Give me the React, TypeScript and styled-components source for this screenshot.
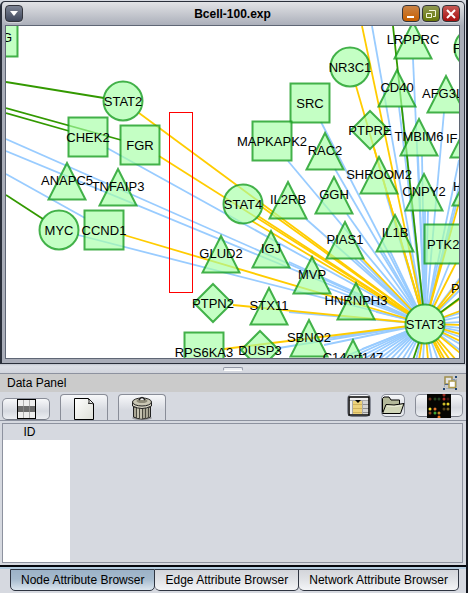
import React, { useState } from "react";
import styled, { createGlobalStyle } from "styled-components";

const GlobalStyle = createGlobalStyle`
  * { box-sizing: border-box; }
  body {
    margin: 0;
    background: #d6d9e0;
    font-family: "Liberation Sans", Arial, sans-serif;
    font-size: 12px;
    color: #000;
  }
  button { font: inherit; color: inherit; margin: 0; padding: 0; }
`;

const Page = styled.div`
  display: flex;
  flex-direction: column;
  min-height: 100vh;
  border-right: 2px solid #14171f;
  background: #d6d9e0;
`;

/* ---------- network window ---------- */

const NetworkWindow = styled.section`
  margin: 1px 1px 0 0;
  padding: 0 4px 4px 3px;
  border: 1px solid #2a2f3a;
  border-left-width: 2px;
  border-radius: 5px 5px 0 0;
  background: linear-gradient(#e2e3e6, #a9adb8 24px, #a9adb8);
`;

const TitleBar = styled.header`
  display: grid;
  grid-template-columns: 1fr auto 1fr;
  align-items: center;
  height: 23px;
`;

const Title = styled.h1`
  margin: 0;
  font-size: 12px;
  line-height: 16px;
  font-weight: bold;
`;

const WindowButtons = styled.div`
  display: flex;
  justify-content: flex-end;
  gap: 2px;
`;

const WindowButton = styled.button<{ $top: string; $bottom: string }>`
  display: grid;
  place-items: center;
  width: 18px;
  height: 17px;
  border: 1px solid #33353c;
  border-radius: 4px;
  background: linear-gradient(${(p) => p.$top}, ${(p) => p.$bottom});
  box-shadow: 0 1px 0 rgba(255, 255, 255, 0.4);
`;

const Canvas = styled.svg`
  display: block;
  width: 100%;
  border: 1px solid #5f6675;
  background: #fff;
  font-family: "Liberation Sans", Arial, sans-serif;
  font-size: 13px;
`;

type Shape = "circle" | "square" | "triangle" | "diamond";
/* The optional last value is the left edge of a label that runs past the view. */
type GraphNode = [label: string, shape: Shape, x: number, y: number, labelX?: number];
type Edge = [color: string, x1: number, y1: number, x2: number, y2: number];

const BLUE = "#99ccff";
const GOLD = "#ffcc00";
const GREEN = "#339900";

const hub = { x: 425, y: 324 };

const nodes: GraphNode[] = [
  ["G", "square", -2, 37, 2],
  ["STAT2", "circle", 123, 101],
  ["CHEK2", "square", 88, 137],
  ["FGR", "square", 140, 145],
  ["NR3C1", "circle", 350, 67],
  ["SRC", "square", 310, 103],
  ["MAPKAPK2", "square", 272, 141],
  ["LRPPRC", "triangle", 413, 40],
  ["F", "circle", 474, 48, 453],
  ["CD40", "triangle", 397, 88],
  ["AFG3L", "triangle", 446, 94, 422],
  ["PTPRE", "diamond", 370, 130],
  ["TMBIM6", "triangle", 419, 137],
  ["RAC2", "triangle", 325, 151],
  ["IF", "triangle", 469, 139, 446],
  ["SHROOM2", "triangle", 379, 175],
  ["CNPY2", "triangle", 424, 192],
  ["H", "triangle", 471, 187, 453],
  ["GGH", "triangle", 334, 195],
  ["IL2RB", "triangle", 288, 200],
  ["STAT4", "circle", 243, 204],
  ["ANAPC5", "triangle", 67, 181],
  ["TNFAIP3", "triangle", 118, 187],
  ["MYC", "circle", 59, 230],
  ["CCND1", "square", 104, 230],
  ["IL1B", "triangle", 395, 233],
  ["PIAS1", "triangle", 345, 240],
  ["PTK2", "square", 444, 244, 427],
  ["GLUD2", "triangle", 221, 254],
  ["IGJ", "triangle", 271, 249],
  ["MVP", "triangle", 312, 275],
  ["HNRNPH3", "triangle", 356, 301],
  ["STX11", "triangle", 269, 306],
  ["PTPN2", "diamond", 213, 303],
  ["SBNO2", "triangle", 309, 338],
  ["DUSP3", "diamond", 260, 350],
  ["RPS6KA3", "square", 204, 352],
  ["C14orf147", "triangle", 353, 358],
  ["STAT3", "circle", hub.x, hub.y],
];

const localEdges: Edge[] = [
  [GREEN, 6, 82, 104, 98],
  [GREEN, 6, 108, 121, 140],
  [GREEN, 6, 113, 69, 131],
  [GREEN, 6, 195, 43, 219],
  [BLUE, 6, 174, 85, 218],
];

/* Far ends of the edges that meet at STAT3, in drawing order. */
const hubEdges: Record<string, [number, number][]> = {
  [BLUE]: [
    [107, 148], [6, 139], [6, 151], [78, 235], [289, 262], [288, 161],
    [321, 122], [335, 169], [347, 214], [306, 219], [372, 26], [413, 59],
    [399, 107], [402, 107], [386, 194], [418, 156], [422, 156], [425, 211],
    [428, 211], [444, 112], [466, 158], [459, 160], [456, 206], [360, 259],
    [355, 259], [328, 288], [289, 312], [376, 312], [328, 338], [279, 348],
    [324, 345], [362, 349], [336, 360], [345, 360], [354, 360], [362, 360],
    [370, 360], [378, 360], [384, 360], [390, 360], [396, 360], [402, 360],
    [407, 360], [416, 360], [423, 360], [432, 360], [438, 360], [460, 350],
    [460, 344], [460, 337], [460, 331], [460, 328], [460, 322], [460, 317],
    [460, 313], [460, 290], [460, 278], [450, 262], [436, 262], [404, 251],
    [390, 251], [410, 251], [380, 251],
  ],
  [GOLD]: [
    [139, 113], [159, 156], [262, 207], [258, 216], [252, 221], [362, 26],
    [356, 86], [374, 148], [124, 235], [233, 305], [224, 349], [362, 258],
    [471, 160], [441, 263], [456, 263], [460, 280], [460, 286], [460, 299],
    [460, 311], [460, 325], [460, 334], [460, 341], [460, 353], [456, 360],
    [450, 360], [445, 360], [442, 360], [428, 360], [419, 360],
  ],
  [GREEN]: [[393, 26], [460, 298], [413, 360]],
};

function NodeShape({ shape, x, y, fill }: { shape: Shape; x: number; y: number; fill: string }) {
  const paint = { fill, stroke: "rgba(20,155,30,0.78)", strokeWidth: 2 };
  if (shape === "circle") return <circle cx={x} cy={y} r={19.5} {...paint} />;
  if (shape === "square") return <rect x={x - 19.5} y={y - 19.5} width={39} height={39} {...paint} />;
  const points =
    shape === "triangle"
      ? `${x},${y - 18} ${x + 18.5},${y + 18.5} ${x - 18.5},${y + 18.5}`
      : `${x},${y - 19} ${x + 19},${y} ${x},${y + 19} ${x - 19},${y}`;
  return <polygon points={points} {...paint} />;
}

function NetworkGraph() {
  return (
    <Canvas viewBox="6 26 453 332" role="img" aria-label="Bcell-100 network">
      <g strokeWidth={1.8}>
        {Object.entries(hubEdges).map(([color, ends]) =>
          ends.map(([x, y], i) => (
            <line key={color + i} x1={x} y1={y} x2={hub.x} y2={hub.y} stroke={color} />
          ))
        )}
        {localEdges.map(([color, x1, y1, x2, y2], i) => (
          <line key={i} x1={x1} y1={y1} x2={x2} y2={y2} stroke={color} />
        ))}
      </g>
      {nodes.map(([label, shape, x, y, labelX]) => (
        <g key={label}>
          <NodeShape
            shape={shape}
            x={x}
            y={y}
            fill={label === "STAT3" ? "#c3ffc3" : "rgba(165,255,165,0.66)"}
          />
          <text
            x={labelX ?? x}
            y={shape === "triangle" ? y + 4 : y + 5}
            textAnchor={labelX === undefined ? "middle" : "start"}
          >
            {label}
          </text>
        </g>
      ))}
      <text x={451} y={293}>P</text>
      <rect x={169.5} y={112.5} width={23} height={180} fill="none" stroke="#f00" />
    </Canvas>
  );
}

/* ---------- data panel ---------- */

const Splitter = styled.div`
  display: grid;
  place-items: center;
  height: 10px;
  border-bottom: 1px solid #8d929f;
  background: linear-gradient(#bfc3cc, #dde0e6 2px, #d2d5dd);
`;

const Grip = styled.span`
  width: 20px;
  height: 4px;
  border: 1px solid #9095a3;
  border-bottom-color: #fff;
  border-radius: 2px;
  background: #eceef2;
`;

const PanelHeader = styled.header`
  display: flex;
  align-items: center;
  justify-content: space-between;
  height: 18px;
  padding: 0 8px 0 7px;
  background: #cbcbcb;
`;

const PanelTitle = styled.h2`
  margin: 0;
  font-size: 12px;
  line-height: 18px;
  font-weight: normal;
`;

const FloatButton = styled.button`
  display: flex;
  border: 0;
  background: none;
`;

const Toolbar = styled.div`
  display: flex;
  justify-content: space-between;
  height: 29px;
  padding: 2px 3px 0 2px;
  border-bottom: 1px solid #8d929f;
`;

const ToolGroup = styled.div<{ $align: string }>`
  display: flex;
  align-items: ${(p) => p.$align};
  gap: 10px;
`;

const ToolButton = styled.button<{ $width: number; $height: number; $tab?: boolean }>`
  display: flex;
  justify-content: center;
  align-items: ${(p) => (p.$tab ? "flex-end" : "center")};
  width: ${(p) => p.$width}px;
  height: ${(p) => p.$height}px;
  border: 1px solid #898d98;
  border-bottom: ${(p) => (p.$tab ? "0" : "1px solid #777b86")};
  border-radius: ${(p) => (p.$tab ? "4px 4px 0 0" : "5px")};
  background: linear-gradient(#f7f8fa, #d6d9e0 60%, ${(p) => (p.$tab ? "#d6d9e0" : "#eceef2")});

  svg { flex: none; }
`;

const TableFrame = styled.div`
  display: flex;
  flex: 1;
  min-height: 120px;
  margin: 2px 3px 2px 2px;
  border: 1px solid #8d929f;
`;

const AttributeTable = styled.table`
  display: flex;
  flex-direction: column;
  width: 67px;

  thead, tr, th { display: block; }
  th { padding: 0 14px 0 0; font-weight: normal; line-height: 16px; text-align: center; height: 16px; }
  tbody { display: block; flex: 1; background: #fff; }
`;

const TabBar = styled.nav`
  display: flex;
  height: 28px;
  padding: 0 7px 2px 10px;
  border-top: 2px solid #05070d;
  box-shadow: inset 0 2px 0 #b5cde0;
`;

const Tab = styled.button<{ $active: boolean }>`
  flex: 1 1 auto;
  margin-top: 2px;
  border: 1px solid #2e3440;
  border-left-width: ${(p) => (p.$active ? "1px" : "0")};
  border-radius: 0 0 5px 5px;
  white-space: nowrap;
  line-height: 20px;
  background: ${(p) =>
    p.$active
      ? "linear-gradient(#9cb2c7, #a5bacd 45%, #dbe5ee)"
      : "linear-gradient(#d3d5da, #dfe1e5 45%, #f4f5f7)"};
`;

const FloatIcon = () => (
  <svg width="15" height="14" viewBox="0 0 15 14" fill="none">
    <path d="M1.500 4v7M3 12.500h9M13.500 3v8" stroke="#a3adb9" />
    <rect x="2" y="1" width="7" height="7" fill="#e4e4e4" stroke="#a08f4c" strokeWidth="1.500" />
    <path d="M2 8.500h5" stroke="#4b6791" />
    <rect x="6" y="5" width="6.500" height="6.500" fill="#fff" stroke="#b09c4c" strokeWidth="1.500" />
    <path d="M9 3.500h3v2" stroke="#8797ad" />
    <path d="M12 0h2v2h-2zM12 12h2v2h-2zM0 12h2v2H0z" fill="#1f4473" />
  </svg>
);

const GridIcon = () => (
  <svg width="19" height="20" viewBox="0 0 19 20">
    <rect x=".5" y=".5" width="18" height="19" fill="#eee" stroke="#000" />
    <path d="M6.500 1v18M12.500 1v18" stroke="#b0b0b0" />
    <path d="M1 7h17v6H1z" fill="#6b6b6b" />
    <path d="M6.500 7v6M12.500 7v6" stroke="#858585" />
    <path d="M.5.5h18v19H.5z" fill="none" stroke="#000" />
  </svg>
);

const PageIcon = () => (
  <svg width="20" height="22" viewBox="0 0 20 22">
    <defs>
      <linearGradient id="paper" x1="0" y1="0" x2="1" y2="1">
        <stop offset="0" stopColor="#fff" />
        <stop offset="1" stopColor="#dedfd8" />
      </linearGradient>
    </defs>
    <path d="M.5.5h14l5 5v16H.5z" fill="url(#paper)" stroke="#000" />
    <path d="M14.500 1c1 2 .5 3.500 0 4.500 2-.5 3.500 0 5 .5" fill="#fff" stroke="#000" />
  </svg>
);

const TrashIcon = () => (
  <svg width="22" height="24" viewBox="0 0 22 24">
    <ellipse cx="11" cy="22" rx="10" ry="2" fill="#777" opacity=".6" />
    <path d="M2.500 11v10q8.500 4 17 0V11z" fill="#aaa795" stroke="#222" />
    <path d="M5.500 12v10M8.500 12v11M11.500 12v11M14.500 12v11M17.500 12v10" stroke="#4a493f" />
    <path d="M7 12v10M10 12v11" stroke="#e0ddcb" />
    <path d="M1.500 6v4q9.500 5 19 0V6z" fill="#d9d6c5" stroke="#222" />
    <ellipse cx="11" cy="6" rx="9.500" ry="4" fill="#cac7b4" stroke="#222" />
    <ellipse cx="11" cy="5" rx="5.500" ry="2" fill="#8e8b79" />
    <path d="M8 4q3-5 6 0" fill="#eee" stroke="#222" strokeWidth="1.500" />
  </svg>
);

const ColumnsIcon = () => (
  <svg width="22" height="20" viewBox="0 0 22 20">
    <path d="M.5.5h21v18.500H.5z" fill="#eee" />
    <path d="M15 5h6v13h-6z" fill="#d4d4d4" />
    <path d="M5 5h9v13H5z" fill="#edd27b" />
    <path d="M4.500 5v13M14.500 4v14M1 4.500h20" stroke="#aaa" />
    <path d="M5 8.500h9M5 12.500h9M5 16.500h9" stroke="#d0b25c" />
    <path d="M15 8.500h6M15 12.500h6M15 16.500h6" stroke="#8f8f8f" />
    <path d="M7 4h6l-3 3z" fill="#000" />
    <path d="M1 1h20v18H1z" fill="none" stroke="#000" strokeWidth="1.500" />
  </svg>
);

const FolderIcon = () => (
  <svg width="24" height="19" viewBox="0 0 24 19">
    <path d="M1.500 16V2.500L3 1h5l2 3h8.500v4" fill="#b4b99a" stroke="#000" />
    <path d="M1.500 17.500L5 8.500Q12 10 23 7.500L19.500 17.500z" fill="#d1d6b8" stroke="#000" strokeLinejoin="round" />
    <path d="M6 10q8 1 15-.5" fill="none" stroke="#f0f2de" />
  </svg>
);

const dots: [number, number, string][] = [
  [3, 5, "#713019"], [8, 5, "#27421d"], [12, 5, "#254225"], [17, 1, "#96291f"], [17, 5, "#b42b24"],
  [17, 10, "#ccbc2a"], [21, 10, "#ead62b"], [3, 15, "#f2dd2c"], [8, 15, "#e5752b"],
  [17, 15, "#55431b"], [21, 15, "#776225"], [3, 19, "#8e4820"], [8, 19, "#39a835"],
  [12, 19, "#c28b27"], [12, 23, "#ef751d"], [21, 5, "#3a1715"],
];

const HeatmapIcon = () => (
  <svg width="24" height="24" viewBox="0 0 24 24">
    <path d="M0 0h24v24H0z" fill="#050502" />
    {dots.map(([x, y, color]) => (
      <circle key={`${x}-${y}`} cx={x} cy={y} r="1.500" fill={color} />
    ))}
  </svg>
);

const browsers = ["Node Attribute Browser", "Edge Attribute Browser", "Network Attribute Browser"];

export default function App() {
  const [active, setActive] = useState(0);
  return (
    <Page>
      <GlobalStyle />
      <NetworkWindow>
        <TitleBar>
          <WindowButton $top="#7d8494" $bottom="#3f475b" aria-label="Window menu">
            <svg width="8" height="6" viewBox="0 0 8 6"><path d="M0 0h8L4 5z" fill="#fff" /></svg>
          </WindowButton>
          <Title>Bcell-100.exp</Title>
          <WindowButtons>
            <WindowButton $top="#c98346" $bottom="#c75f00" aria-label="Minimize">
              <svg width="10" height="10" viewBox="0 0 10 10"><path d="M1 7h7v2H1z" fill="#fff" /></svg>
            </WindowButton>
            <WindowButton $top="#8f9852" $bottom="#68780a" aria-label="Restore">
              <svg width="12" height="10" viewBox="0 0 12 10" fill="none" stroke="#f4f6df">
                <path d="M4 1.500h6.500v6H8" />
                <path d="M1.500 4.500h5v4h-5z" />
              </svg>
            </WindowButton>
            <WindowButton $top="#c65a55" $bottom="#a80f0f" aria-label="Close">
              <svg width="10" height="10" viewBox="0 0 10 10"><path d="M1 1l8 8M9 1L1 9" stroke="#fff" strokeWidth="2" /></svg>
            </WindowButton>
          </WindowButtons>
        </TitleBar>
        <NetworkGraph />
      </NetworkWindow>

      <Splitter><Grip /></Splitter>

      <PanelHeader>
        <PanelTitle>Data Panel</PanelTitle>
        <FloatButton aria-label="Float panel"><FloatIcon /></FloatButton>
      </PanelHeader>
      <Toolbar>
        <ToolGroup $align="flex-end">
          <ToolButton $width={48} $height={22} aria-label="Select attributes"><GridIcon /></ToolButton>
          <ToolButton $width={48} $height={26} $tab aria-label="New attribute"><PageIcon /></ToolButton>
          <ToolButton $width={48} $height={26} $tab aria-label="Delete attribute"><TrashIcon /></ToolButton>
        </ToolGroup>
        <ToolGroup $align="flex-start">
          <ToolButton $width={24} $height={23} aria-label="Edit columns"><ColumnsIcon /></ToolButton>
          <ToolButton $width={24} $height={23} aria-label="Open"><FolderIcon /></ToolButton>
          <ToolButton $width={48} $height={23} aria-label="Import matrix"><HeatmapIcon /></ToolButton>
        </ToolGroup>
      </Toolbar>
      <TableFrame>
        <AttributeTable>
          <thead><tr><th scope="col">ID</th></tr></thead>
          <tbody />
        </AttributeTable>
      </TableFrame>
      <TabBar>
        {browsers.map((name, i) => (
          <Tab key={name} $active={i === active} onClick={() => setActive(i)}>{name}</Tab>
        ))}
      </TabBar>
    </Page>
  );
}
